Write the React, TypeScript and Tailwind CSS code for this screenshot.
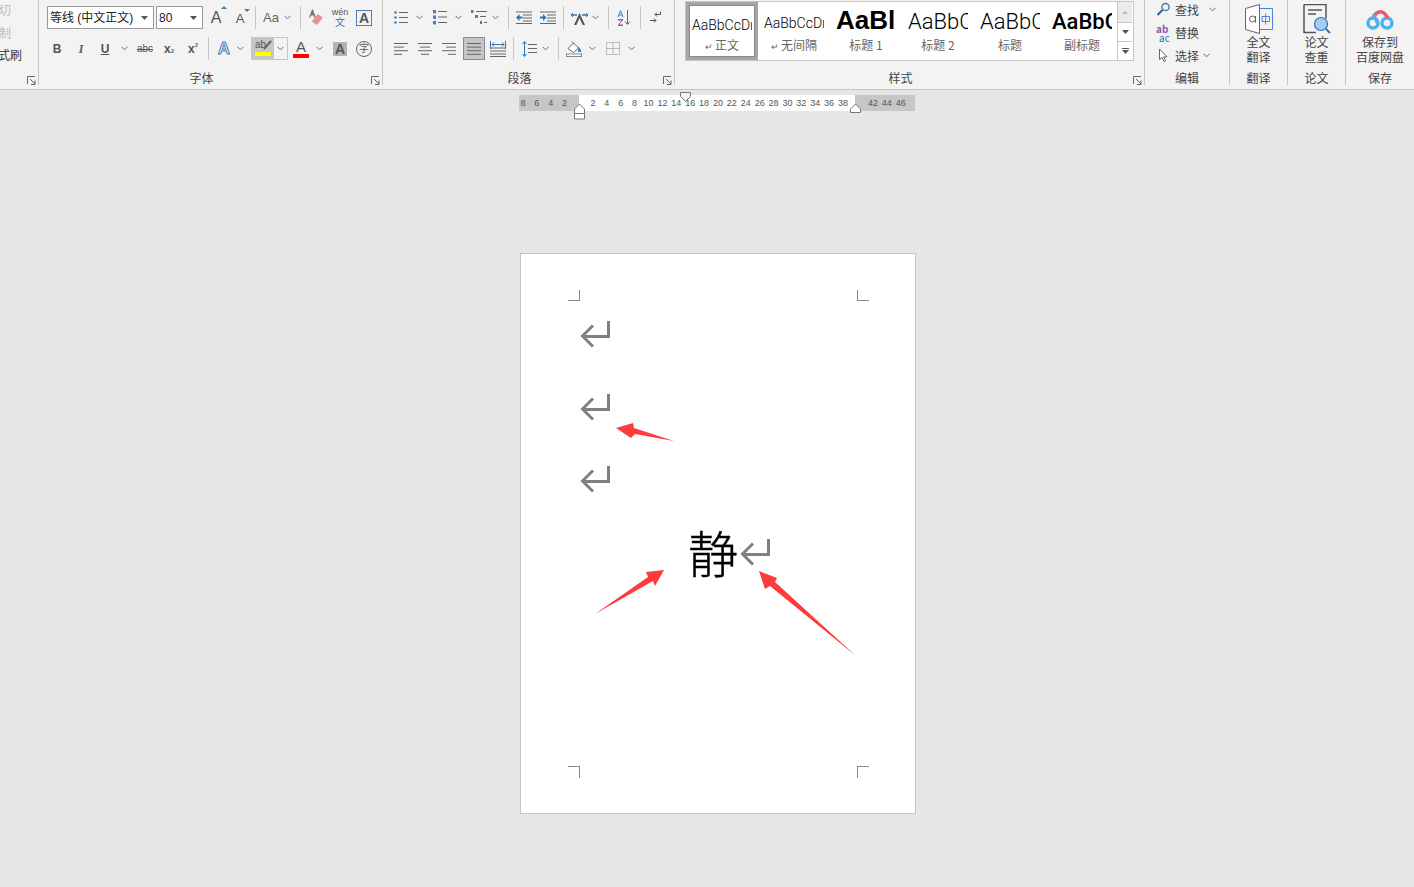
import React from "react";
import clsx from "clsx";

const UI = "font-['Liberation_Sans','Noto_Sans_CJK_SC',sans-serif]";
const CJK = "font-['Noto_Sans_CJK_SC',sans-serif]";

function Slot({ className, children }: { className: string; children?: React.ReactNode }) {
  return <div className={clsx("flex h-[23px] shrink-0 items-center justify-center", className)}>{children}</div>;
}

function Chevron() {
  return (
    <svg width="7" height="5" viewBox="0 0 7 5" fill="none" stroke="#666" strokeWidth="1">
      <path d="M0.5 0.8 3.5 3.8 6.5 0.8" />
    </svg>
  );
}

function Caret() {
  return <svg width="7" height="4" viewBox="0 0 7 4" fill="#555"><path d="M0 0h7L3.5 4z" /></svg>;
}

function Sep({ className }: { className: string }) {
  return <div className={clsx("h-[23px] w-px shrink-0 bg-[#c6c6c6]", className)} />;
}

function Launcher() {
  return (
    <svg width="9" height="9" viewBox="0 0 9 9" fill="none" stroke="#666" strokeWidth="1">
      <path d="M0.5 8V0.5H8M3 3l5 5M8 4.5V8.5H4" />
    </svg>
  );
}

function Lines({ rows, fill = "#666" }: { rows: [number, number][]; fill?: string }) {
  return (
    <svg width="16" height="14" viewBox="0 0 16 14">
      {rows.map(([x, w], i) => (
        <rect key={i} x={x} y={1 + i * 3.6} width={w} height="1" fill={fill} />
      ))}
    </svg>
  );
}

function ReturnMark({ className }: { className?: string }) {
  return (
    <svg className={className} width="30" height="28" viewBox="0 0 30 28" fill="none" stroke="#808080" strokeWidth="3">
      <path d="M28.5 1v15.5H3M13 5.5 2.5 16l10.5 10.5" />
    </svg>
  );
}

function Group({ className, label, launcher, children }: { className: string; label: string; launcher?: boolean; children: React.ReactNode }) {
  return (
    <section className={clsx("relative flex h-[85px] shrink-0 flex-col border-r border-[#c6c6c6]", className)}>
      <div className="h-[70px] shrink-0">{children}</div>
      <div className={clsx("h-[15px] text-center text-[12px] leading-[16px] text-[#444]", launcher && "pr-[18px]", CJK)}>{label}</div>
      {launcher && <div className="absolute right-[2px] bottom-0 flex"><Launcher /></div>}
    </section>
  );
}

function FontGroup() {
  return (
    <Group className="w-[344px]" label="字体" launcher>
      <div className="ml-[8px] flex pt-[6px] items-center">
        <div className="flex h-[23px] w-[107px] items-center justify-between border border-[#9a9a9a] bg-white pl-[2px] pr-[5px] text-[12px] text-[#222]">
          <span className="whitespace-nowrap">等线 (中文正文)</span><Caret />
        </div>
        <div className="ml-[2px] flex h-[23px] w-[47px] items-center justify-between border border-[#9a9a9a] bg-white pl-[2px] pr-[5px] text-[12px] text-[#222]">
          <span>80</span><Caret />
        </div>
        <Slot className="ml-[2px] w-[24px]">
          <span className="relative -ml-[2px] text-[16px] text-[#555]">A<span className="absolute -right-[6px] top-0 h-0 w-0 border-x-[3px] border-b-[3px] border-x-transparent border-b-[#4a7fb5]" /></span>
        </Slot>
        <Slot className="w-[24px]">
          <span className="relative -ml-[2px] mt-[2px] text-[13px] text-[#555]">A<span className="absolute -right-[6px] top-0 h-0 w-0 border-x-[3px] border-t-[3px] border-x-transparent border-t-[#4a7fb5]" /></span>
        </Slot>
        <Sep className="ml-[2px]" />
        <Slot className="ml-[6px] w-[18px] text-[13px] text-[#666]">Aa</Slot>
        <Slot className="w-[14px]"><Chevron /></Slot>
        <Sep className="ml-[6px]" />
        <Slot className="ml-[3px] w-[24px]">
          <svg width="16" height="17" viewBox="0 0 16 17">
            <path d="M4 0.5 1 8.5h1.4l.7-2h2.5l.7 2H7.8L5 0.5z" fill="#777" />
            <path d="M9.5 5 15 8.5 9 16 3.8 12.5z" fill="#e8919b" />
          </svg>
        </Slot>
        <Slot className="w-[24px]">
          <div className="flex flex-col items-center leading-none">
            <span className="text-[9px] leading-[9px] text-[#555]">wén</span>
            <span className="text-[10px] leading-[11px] text-[#2f74b5]">文</span>
          </div>
        </Slot>
        <Slot className="w-[24px]">
          <span className="flex h-[16px] w-[16px] items-center justify-center border border-[#4a7fb5] text-[14px] font-bold leading-none text-[#555]">A</span>
        </Slot>
      </div>
      <div className="ml-[6px] mt-[8px] flex items-center">
        <Slot className="w-[24px] text-[12px] font-bold text-[#555]">B</Slot>
        <Slot className="w-[24px] font-['Liberation_Serif'] text-[13px] italic font-bold text-[#666]">I</Slot>
        <Slot className="w-[24px] text-[12px] font-bold text-[#555] underline">U</Slot>
        <Slot className="w-[14px]"><Chevron /></Slot>
        <Slot className="ml-[2px] w-[24px] text-[10px] text-[#555] line-through">abc</Slot>
        <Slot className="w-[24px] text-[12px] font-bold text-[#555]">x<span className="mt-[6px] text-[6px] text-[#2f74b5]">2</span></Slot>
        <Slot className="w-[24px] text-[12px] font-bold text-[#555]">x<span className="mb-[6px] text-[6px] text-[#2f74b5]">2</span></Slot>
        <Sep className="ml-[3px]" />
        <Slot className="ml-[3px] w-[24px] text-[17px] font-bold text-[#dce8f5] [-webkit-text-stroke:1px_#4a86c5]">A</Slot>
        <Slot className="w-[8px]"><Chevron /></Slot>
        <div className="ml-[7px] flex h-[23px] w-[37px] shrink-0 border border-[#c6c6c6]">
          <div className="relative flex w-[22px] flex-col bg-[#c6c6c6] pl-[3px]">
            <span className="text-[10px] leading-[13px] text-[#555]">ab</span>
            <svg className="absolute left-[11px] top-[2px]" width="9" height="10" viewBox="0 0 9 10"><path d="M8 1 1 9" stroke="#666" strokeWidth="2" /></svg>
            <div className="absolute bottom-[3px] left-[3px] h-[4px] w-[16px] bg-[#ffff00]" />
          </div>
          <div className="flex flex-1 items-center justify-center"><Chevron /></div>
        </div>
        <Slot className="ml-px w-[24px]">
          <div className="flex flex-col items-center">
            <span className="text-[15px] leading-[13px] text-[#555]">A</span>
            <div className="mt-[1px] h-[4px] w-[16px] bg-[#ff0000]" />
          </div>
        </Slot>
        <Slot className="w-[12px]"><Chevron /></Slot>
        <Slot className="ml-[3px] w-[24px]">
          <span className="flex h-[14px] w-[14px] items-center justify-center bg-[#b3b3b3] text-[14px] font-bold leading-none text-[#555]">A</span>
        </Slot>
        <Slot className="w-[24px]">
          <span className="flex h-[16px] w-[16px] items-center justify-center rounded-full border border-[#666] text-[10px] leading-none text-[#555]">字</span>
        </Slot>
      </div>
    </Group>
  );
}

function BulletIcon() {
  return (
    <svg width="14" height="14" viewBox="0 0 14 14">
      {[1.5, 6.5, 11.5].map((y) => (
        <g key={y}><circle cx="1.5" cy={y} r="1.3" fill="#4a7fb5" /><rect x="5" y={y - 0.5} width="9" height="1" fill="#666" /></g>
      ))}
    </svg>
  );
}

function NumberIcon() {
  return (
    <svg width="15" height="15" viewBox="0 0 15 15">
      {[1.5, 7, 12.5].map((y) => (
        <g key={y}><rect x="1" y={y - 1.5} width="3" height="3.4" fill="#4a7fb5" /><rect x="6" y={y - 0.5} width="9" height="1" fill="#666" /></g>
      ))}
    </svg>
  );
}

function MultiIcon() {
  return (
    <svg width="16" height="15" viewBox="0 0 16 15">
      <rect x="0" y="0" width="2.5" height="3" fill="#4a7fb5" /><rect x="5" y="1" width="11" height="1" fill="#666" />
      <rect x="4" y="5" width="3" height="3" fill="#4a7fb5" /><rect x="9" y="6" width="6" height="1" fill="#666" />
      <rect x="9" y="11" width="2" height="3" fill="#4a7fb5" /><rect x="13" y="12" width="3" height="1" fill="#666" />
    </svg>
  );
}

function IndentIcon({ flip }: { flip?: boolean }) {
  return (
    <svg width="16" height="13" viewBox="0 0 16 13">
      {[0.5, 3.5, 6.5, 9.5, 12].map((y) => <rect key={y} x={y > 2 && y < 10 ? 7 : 0} y={y} width={y > 2 && y < 10 ? 9 : 16} height="1" fill="#666" />)}
      <path d={flip ? "M0 5.5h3V3l3.5 3.5L3 10V7.5H0z" : "M6.5 5.5h-3V3L0 6.5 3.5 10V7.5h3z"} fill="#2f74b5" />
    </svg>
  );
}

function ParagraphGroup() {
  const left: [number, number][] = [[0, 14], [0, 10], [0, 14], [0, 8]];
  const center: [number, number][] = [[0, 14], [2, 10], [0, 14], [3, 8]];
  const right: [number, number][] = [[0, 14], [4, 10], [0, 14], [6, 8]];
  return (
    <Group className="w-[292px]" label="段落" launcher>
      <div className="flex items-center pt-[6px] pl-[7px]">
        <Slot className="w-[22px]"><BulletIcon /></Slot>
        <Slot className="w-[14px]"><Chevron /></Slot>
        <Slot className="ml-[2px] w-[22px]"><NumberIcon /></Slot>
        <Slot className="ml-px w-[14px]"><Chevron /></Slot>
        <Slot className="ml-[4px] w-[20px]"><MultiIcon /></Slot>
        <Slot className="w-[12px]"><Chevron /></Slot>
        <Sep className="ml-[7px]" />
        <Slot className="ml-[3px] w-[24px]"><IndentIcon /></Slot>
        <Slot className="w-[24px]"><IndentIcon flip /></Slot>
        <Sep className="ml-[3px]" />
        <Slot className="ml-[5px] w-[20px]">
          <svg width="17" height="14" viewBox="0 0 17 14">
            <path d="M1 4h5M11 4h5" stroke="#2f74b5" strokeWidth="1.5" />
            <path d="M2 2 0 4l2 2M15 2l2 2-2 2" stroke="#2f74b5" fill="none" />
            <path d="M3 14 8.5 2 14 14h-2.4L8.5 7 5.4 14z" fill="#555" />
          </svg>
        </Slot>
        <Slot className="w-[12px]"><Chevron /></Slot>
        <Sep className="ml-[7px]" />
        <Slot className="ml-[3px] w-[24px]">
          <svg width="14" height="16" viewBox="0 0 14 16">
            <path d="M1 7 3.5 0.5 6 7M2 5h3" stroke="#4a7fb5" fill="none" />
            <path d="M1 9h5v1L2.5 14.5H6V16H1v-1l3.5-4.5H1z" fill="#8e5bb5" />
            <path d="M10.5 0v14M8 11.5l2.5 3 2.5-3" stroke="#666" fill="none" />
          </svg>
        </Slot>
        <Sep className="ml-[4px]" />
        <Slot className="ml-[2px] w-[24px]">
          <svg width="11" height="13" viewBox="0 0 11 13" fill="none" stroke="#555">
            <path d="M10.5 0.5v3H5M7 1.5 5 3.5l2 2M0 9.5h6M4 7.5l2 2-2 2" />
          </svg>
        </Slot>
      </div>
      <div className="mt-[8px] flex items-center pl-[7px]">
        <Slot className="w-[24px]"><Lines rows={left} /></Slot>
        <Slot className="w-[24px]"><Lines rows={center} /></Slot>
        <Slot className="w-[24px]"><Lines rows={right} /></Slot>
        <Slot className="ml-px w-[22px] border border-[#8a8a8a] bg-[#c6c6c6]"><Lines rows={left.map(() => [1, 14])} /></Slot>
        <Slot className="ml-[3px] w-[20px]">
          <svg width="16" height="16" viewBox="0 0 16 16">
            <path d="M0.5 0v8M15.5 0v8M2 3.5h12M4 1.5 2 3.5l2 2M12 1.5l2 2-2 2" stroke="#2f74b5" fill="none" />
            {[7, 10, 13, 15.5].map((y) => <rect key={y} x="0" y={y - 0.5} width="16" height="1" fill="#666" />)}
          </svg>
        </Slot>
        <Sep className="ml-[5px]" />
        <Slot className="ml-[6px] w-[18px]">
          <svg width="15" height="16" viewBox="0 0 15 16">
            <path d="M2.5 0.5v15M0.5 3l2-2.5 2 2.5M0.5 13l2 2.5 2-2.5" stroke="#2f74b5" fill="none" />
            {[3, 7, 11].map((y) => <rect key={y} x="6" y={y} width="9" height="1" fill="#666" />)}
          </svg>
        </Slot>
        <Slot className="ml-px w-[12px]"><Chevron /></Slot>
        <Sep className="ml-[7px]" />
        <Slot className="ml-[5px] w-[20px]">
          <svg width="16" height="16" viewBox="0 0 16 16">
            <path d="M2 7.5 7.5 2l5 5-5 4.5z" fill="#fff" stroke="#666" />
            <path d="M6 0.5 8 3" stroke="#666" />
            <path d="M12 5l3 4v2h-3z" fill="#4a7fb5" />
            <rect x="0.5" y="13" width="15" height="2.5" fill="#fff" stroke="#888" />
          </svg>
        </Slot>
        <Slot className="ml-[2px] w-[12px]"><Chevron /></Slot>
        <Slot className="ml-[6px] w-[18px]">
          <svg width="14" height="13" viewBox="0 0 14 13" fill="none" stroke="#888" strokeDasharray="1 1">
            <path d="M0.5 0.5h13v12h-13zM7 0.5v12M0.5 6.5h13" />
          </svg>
        </Slot>
        <Slot className="ml-[3px] w-[12px]"><Chevron /></Slot>
      </div>
    </Group>
  );
}

function StyleItem({ sample, label, mark, className, sampleClass, boxClass = "h-[34px]" }: { sample: string; label: string; mark?: boolean; className?: string; sampleClass: string; boxClass?: string }) {
  return (
    <div className={clsx("flex h-[58px] w-[72px] shrink-0 flex-col items-center overflow-hidden", className)}>
      <div className={clsx("flex w-[60px] items-end justify-start overflow-hidden", boxClass)}>
        <span className={clsx("whitespace-nowrap text-black", sampleClass)}>{sample}</span>
      </div>
      <div className={clsx("mt-[1px] text-[12px] leading-[16px] text-[#666]", CJK)}>{mark && <span className="mr-[2px] text-[9px]">↵</span>}{label}</div>
    </div>
  );
}

function StylesGroup() {
  const light = "font-['Roboto'] font-light";
  return (
    <Group className="w-[470px]" label="样式" launcher>
      <div className="ml-[10px] mt-px flex h-[60px] w-[449px] border border-[#c6c6c6] bg-white">
        <StyleItem sample="AaBbCcDı" label="正文" mark boxClass="h-[31px]" sampleClass={clsx(light, "text-[14px] leading-[22px]")} className="border-[3px] border-[#a6a6a6] outline outline-1 -outline-offset-[4px] outline-[#8a8a8a]" />
        <StyleItem sample="AaBbCcDı" label="无间隔" mark sampleClass={clsx(light, "text-[14px] leading-[26px]")} />
        <StyleItem sample="AaBl" label="标题 1" sampleClass="text-[26px] font-bold leading-[32px]" />
        <StyleItem sample="AaBbC" label="标题 2" sampleClass={clsx(light, "text-[22px] leading-[29px]")} />
        <StyleItem sample="AaBbC" label="标题" sampleClass={clsx(light, "text-[22px] leading-[29px]")} />
        <StyleItem sample="AaBbC" label="副标题" sampleClass="font-['Roboto'] font-medium text-[22px] leading-[29px]" />
        <div className="ml-[-1px] flex w-[15px] shrink-0 flex-col border-l border-[#c6c6c6]">
          <div className="flex h-[21px] items-center justify-center border-b border-[#c6c6c6] bg-[#ebebeb]">
            <span className="h-0 w-0 border-x-[3px] border-b-[3px] border-x-transparent border-b-[#bbb]" />
          </div>
          <div className="flex h-[19px] items-center justify-center border-b border-[#c6c6c6]"><Caret /></div>
          <div className="flex flex-1 flex-col items-center justify-center gap-px">
            <div className="h-px w-[7px] bg-[#555]" /><Caret />
          </div>
        </div>
      </div>
    </Group>
  );
}

function EditGroup() {
  return (
    <Group className="w-[85px]" label="编辑">
      <div className={clsx("flex flex-col pl-[11px] text-[12px] text-[#444]", CJK)}>
        <div className="flex h-[23px] -mt-[2px] items-center">
          <svg width="15" height="15" viewBox="0 0 15 15" fill="none">
            <circle cx="9.5" cy="5" r="3.6" stroke="#4a7fb5" strokeWidth="1.5" />
            <path d="M6.5 8 1.5 13" stroke="#2f5f95" strokeWidth="2" />
          </svg>
          <span className="ml-[4px]">查找</span>
          <span className="ml-[10px] flex"><Chevron /></span>
        </div>
        <div className="flex h-[23px] items-center">
          <div className="flex w-[15px] flex-col text-[10px] leading-[9px]">
            <span className="h-[9px] font-bold text-[#8e5bb5]">ab</span>
            <span className="h-[9px] pl-[3px] text-[#2f74b5]">ac</span>
          </div>
          <span className="ml-[4px]">替换</span>
        </div>
        <div className="flex h-[23px] items-center">
          <svg width="15" height="15" viewBox="0 0 15 15" fill="#fff" stroke="#666">
            <path d="M3.5 1v10.5L6 9.5l2 4 1.6-.8-2-3.8H11z" />
          </svg>
          <span className="ml-[4px]">选择</span>
          <span className="ml-[4px] flex"><Chevron /></span>
        </div>
      </div>
    </Group>
  );
}

function BigButton({ icon, lines }: { icon: React.ReactNode; lines: string[] }) {
  return (
    <div className={clsx("flex flex-col items-center text-[12px] leading-[14.5px] text-[#444]", CJK)}>
      <div className="flex h-[35px] items-center justify-center pt-[2px]">{icon}</div>
      {lines.map((l) => <span key={l} className="whitespace-nowrap">{l}</span>)}
    </div>
  );
}

function Ribbon() {
  return (
    <div className={clsx("flex h-[90px] w-full overflow-hidden border-b border-[#c6c6c6] bg-[#f3f3f3]", UI)}>
      <Group className="w-[39px]" label="" launcher>
        <div className={clsx("-mt-px flex flex-col text-[12px] leading-[22.5px]", CJK)}>
          <span className="-ml-px text-[#bbb]">切</span>
          <span className="-ml-px text-[#bbb]">制</span>
          <span className="-ml-[2px] whitespace-nowrap text-[#333]">式刷</span>
        </div>
      </Group>
      <FontGroup />
      <ParagraphGroup />
      <StylesGroup />
      <EditGroup />
      <Group className="w-[58px]" label="翻译">
        <BigButton
          lines={["全文", "翻译"]}
          icon={
            <svg width="28" height="30" viewBox="0 0 28 30" fill="none">
              <path d="M0.5 4.5 14.5 0.5v29l-14-4z" stroke="#666" fill="#fff" />
              <path d="M14 4.5h13.5v21H14" stroke="#4a86d5" />
              <circle cx="7.5" cy="15" r="3" stroke="#666" />
              <path d="M10.5 12v6.5" stroke="#666" />
              <path d="M17 12.5h7.5v5H17zM20.7 9.5v11" stroke="#4a86d5" />
            </svg>
          }
        />
      </Group>
      <Group className="w-[58px]" label="论文">
        <BigButton
          lines={["论文", "查重"]}
          icon={
            <svg width="28" height="30" viewBox="0 0 28 30" fill="none">
              <path d="M1 0.5h22v14M1 0.5v28h12" stroke="#555" strokeWidth="1.5" />
              <path d="M5 6h14M5 10h8" stroke="#555" strokeWidth="1.5" />
              <circle cx="18" cy="20" r="6.5" fill="#a5cdf0" stroke="#2f74b5" strokeWidth="1.2" />
              <path d="m23 25 4 4" stroke="#2f74b5" strokeWidth="2" />
            </svg>
          }
        />
      </Group>
      <section className="relative flex h-[85px] w-[68px] shrink-0 flex-col">
        <div className="h-[70px] shrink-0">
          <BigButton
            lines={["保存到", "百度网盘"]}
            icon={
              <svg width="28" height="22" viewBox="0 0 28 22" fill="none" strokeWidth="3.5">
                <circle cx="7" cy="15" r="5" stroke="#4db2f0" />
                <circle cx="21" cy="15" r="5" stroke="#4db2f0" />
                <path d="M8.5 11 A6 6 0 0 1 19 6 L22 10" stroke="#f0566e" />
                <path d="M7 6 11 15" stroke="#4db2f0" strokeWidth="2.5" />
              </svg>
            }
          />
        </div>
        <div className={clsx("h-[15px] text-center text-[12px] leading-[16px] text-[#444]", CJK)}>保存</div>
      </section>
    </div>
  );
}

function Ruler() {
  const white = [2, 4, 6, 8, 10, 12, 14, 16, 18, 20, 22, 24, 26, 28, 30, 32, 34, 36, 38];
  const cell = "w-[13.9px] shrink-0 text-center";
  return (
    <div className={clsx("relative ml-[519px] mt-[5px] flex h-[16px] w-[396px] text-[9px] leading-[17px] text-[#555]", UI)}>
      <div className="flex w-[60px] shrink-0 bg-[#c6c6c6]">
        <div className="-ml-[3px] flex">{[8, 6, 4, 2].map((n) => <span key={n} className={cell}>{n}</span>)}</div>
      </div>
      <div className="flex w-[276px] shrink-0 bg-white pl-[7px]">
        {white.map((n) => <span key={n} className={cell}>{n}</span>)}
      </div>
      <div className="flex w-[60px] shrink-0 bg-[#c6c6c6] pl-[11px]">
        {[42, 44, 46].map((n) => <span key={n} className={cell}>{n}</span>)}
      </div>
      <svg className="absolute left-[161px] -top-[3px]" width="12" height="10" viewBox="0 0 12 10" fill="#f3f3f3" stroke="#777">
        <path d="M0.5 0.5h10v4l-5 5-5-5z" />
      </svg>
      <svg className="absolute left-[55px] top-[8px]" width="12" height="17" viewBox="0 0 12 17" fill="#fff" stroke="#777">
        <path d="M0.5 6 5.5 1l5 5v4.5h-10zM0.5 10.5h10v5.5h-10z" />
      </svg>
      <svg className="absolute left-[331px] top-[8px]" width="12" height="10" viewBox="0 0 12 10" fill="#fff" stroke="#777">
        <path d="M0.5 6 5.5 1l5 5v3.5h-10z" />
      </svg>
    </div>
  );
}

function Page() {
  return (
    <div className="relative ml-[520px] mt-[142px] h-[561px] w-[396px] border border-[#c6c6c6] bg-white pl-[59px] pt-[66px]">
      <div className="absolute left-[47px] top-[36px] h-[11px] w-[12px] border-b border-r border-[#8a8a8a]" />
      <div className="absolute left-[336px] top-[36px] h-[11px] w-[12px] border-b border-l border-[#8a8a8a]" />
      <div className="absolute left-[47px] top-[512px] h-[12px] w-[12px] border-t border-r border-[#8a8a8a]" />
      <div className="absolute left-[336px] top-[512px] h-[12px] w-[12px] border-t border-l border-[#8a8a8a]" />

      <div className="h-[73px]"><ReturnMark /></div>
      <div className="h-[72px]"><ReturnMark /></div>
      <div className="h-[57px]"><ReturnMark /></div>
      <div className="flex items-center pl-[108px]">
        <span className={clsx("w-[50px] text-[50px] font-light leading-[58px] text-black [-webkit-text-stroke:0.4px_#000]", CJK)}>静</span>
        <ReturnMark className="ml-[2px] mt-[2px]" />
      </div>

      {/* red annotation arrows, drawn in screen coordinates */}
      <svg className="pointer-events-none absolute -left-[521px] -top-[254px]" width="1414" height="887" viewBox="0 0 1414 887" fill="#ff3b3b">
        <polygon points="616,428 633,423 634,428 674,441 635,434 631,438" />
        <polygon points="595,614 648,577 646,572 664,570 655,586 653,581" />
        <polygon points="759,571 777,578 775,582 856,656 770,586 765,589" />
      </svg>
    </div>
  );
}

export default function App() {
  return (
    <div className="h-[887px] w-[1414px] overflow-hidden bg-[#e6e6e6]">
      <Ribbon />
      <Ruler />
      <Page />
    </div>
  );
}
